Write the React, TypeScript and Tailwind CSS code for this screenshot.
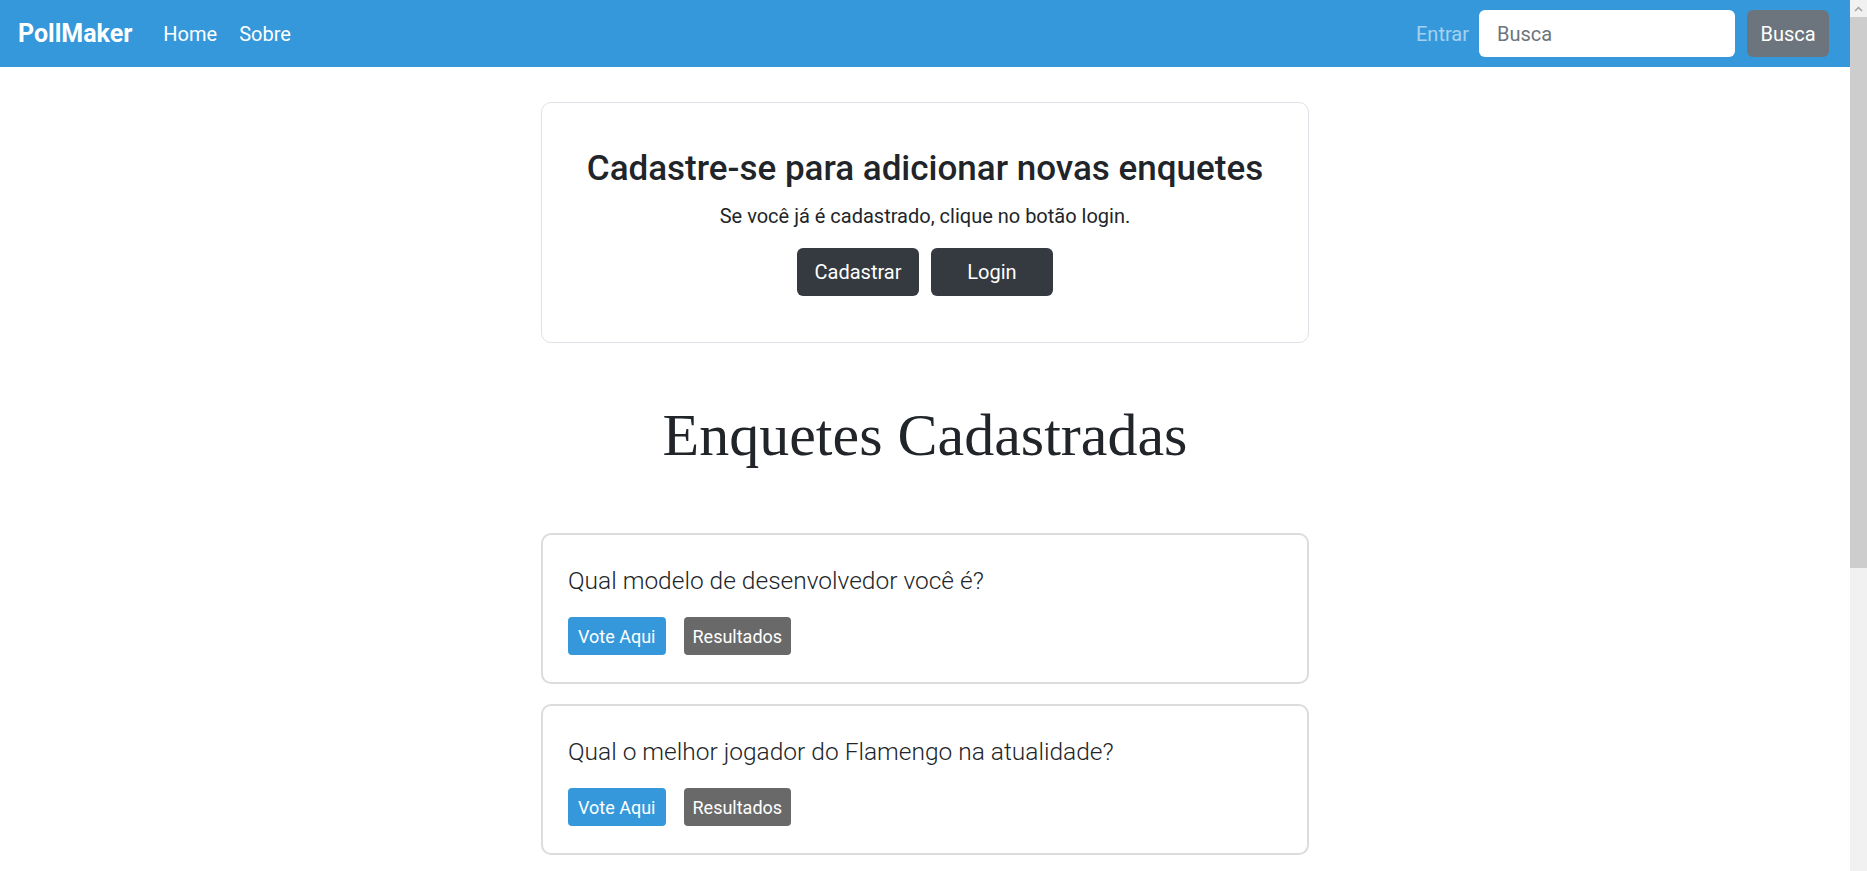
import React from 'react';

const polls = [
  'Qual modelo de desenvolvedor você é?',
  'Qual o melhor jogador do Flamengo na atualidade?',
];

const PollCard = ({ question }: { question: string }) => (
  <div className="w-[768px] rounded-[10px] border-2 border-[#dcdcdc] px-[25px] pt-[31px] pb-[27px]">
    <h5 className="text-[24.5px] leading-[29px] font-light text-[#212529]">{question}</h5>
    <div className="mt-[22px] flex gap-[18px]">
      <button className="h-[38px] rounded-[4px] bg-[#3498db] px-[10px] text-[18px] text-white">Vote Aqui</button>
      <button className="h-[38px] rounded-[4px] bg-[#696969] px-[9px] text-[18px] text-white">Resultados</button>
    </div>
  </div>
);

export default function App() {
  return (
    <div className="flex h-screen overflow-hidden bg-white font-['Segoe_UI',Roboto,'Liberation_Sans',sans-serif]">
      <div className="flex min-w-0 flex-1 flex-col">
        <nav className="flex h-[67px] shrink-0 items-center bg-[#3498db] pl-[18px] pr-[21px]">
          <a className="mr-[31px] text-[25px] font-bold text-white">PollMaker</a>
          <a className="text-[20px] text-white">Home</a>
          <a className="ml-[22px] text-[20px] text-white">Sobre</a>
          <div className="ml-auto flex items-center">
            <a className="mr-[10px] text-[20px] text-white/55">Entrar</a>
            <input
              placeholder="Busca"
              className="h-[47px] w-[256px] rounded-[6px] bg-white px-[18px] text-[20px] text-[#495057] outline-none placeholder:text-[#6c757d]"
            />
            <button className="ml-[12px] h-[47px] w-[82px] rounded-[6px] bg-[#6c757d] text-[20px] text-white">Busca</button>
          </div>
        </nav>

        <main className="flex flex-1 flex-col items-center pt-[35px]">
          <section className="flex h-[241px] w-[768px] flex-col items-center rounded-[10px] border border-[#dee2e6] pt-[45px]">
            <h2 className="text-[35px] leading-[42px] font-medium text-[#212529]">Cadastre-se para adicionar novas enquetes</h2>
            <p className="mt-[11px] text-[20px] leading-[30px] text-[#212529]">Se você já é cadastrado, clique no botão login.</p>
            <div className="mt-[17px] flex gap-[12px]">
              <button className="h-[48px] w-[122px] rounded-[6px] bg-[#343a40] text-[20px] text-white">Cadastrar</button>
              <button className="h-[48px] w-[122px] rounded-[6px] bg-[#343a40] text-[20px] text-white">Login</button>
            </div>
          </section>

          <h1 className="mt-[56px] font-['Garamond','Liberation_Serif',serif] text-[60px] leading-[72px] text-[#212529]">
            Enquetes Cadastradas
          </h1>

          <div className="mt-[62px] flex flex-col gap-[20px]">
            {polls.map((q) => (
              <PollCard key={q} question={q} />
            ))}
          </div>
        </main>
      </div>

      {/* page scrollbar */}
      <div className="flex w-[17px] shrink-0 flex-col bg-[#f1f1f1]">
        <div className="flex h-[17px] items-center justify-center">
          <svg width="9" height="6" viewBox="0 0 9 6">
            <path d="M1 5 L4.5 1.5 L8 5" fill="none" stroke="#a3a3a3" strokeWidth="1.5" />
          </svg>
        </div>
        <div className="h-[551px] bg-[#cdcdcd]" />
      </div>
    </div>
  );
}
